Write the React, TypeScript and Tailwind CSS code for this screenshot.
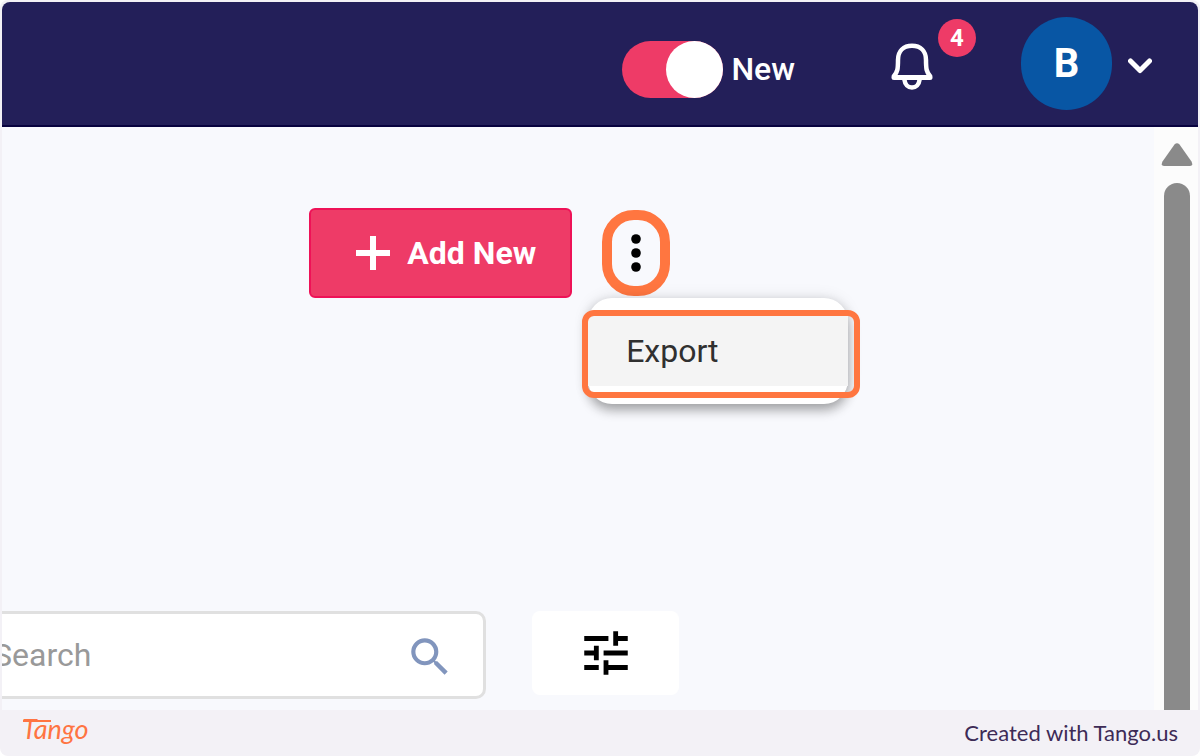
import React, { useState } from "react";
import { MdSearch, MdTune } from "react-icons/md";

function BellIcon() {
  return (
    <svg viewBox="0 0 42 48" className="h-12 w-[42px]" fill="none" stroke="#fff" strokeWidth="4.500" strokeLinecap="round" strokeLinejoin="round" aria-hidden="true">
      <path d="M3 34C6.500 30 7 27 7 18C7 9 12.500 3.800 21 3.800S35 9 35 18c0 9 .5 12 4 16" />
      <path d="M3 35.500h36" strokeWidth="5" />
      <path d="M13.500 38c.5 4.500 3.500 7.500 7.500 7.500s7-3 7.500-7.500" />
    </svg>
  );
}

function Header() {
  const [isNew, setIsNew] = useState(true);
  return (
    <header className="flex h-[125px] shrink-0 items-start justify-end border-b-2 border-[#08023f] bg-[#231f59] pr-[46px] text-white">
      <label className="mt-[39px] flex items-center gap-2 text-[32px] font-medium leading-[57px]">
        <input type="checkbox" role="switch" checked={isNew} onChange={(e) => setIsNew(e.target.checked)} className="peer sr-only" />
        <span className="flex h-[57px] w-[101px] justify-start rounded-full bg-[#8b89a8] peer-checked:justify-end peer-checked:bg-[#ee3b67]">
          <span className="size-[57px] rounded-full bg-white" />
        </span>
        New
      </label>
      <button type="button" aria-label="Notifications, 4 unread" className="relative ml-24 mt-10">
        <BellIcon />
        <span className="absolute -right-[43px] -top-[23px] flex size-[38px] items-center justify-center rounded-full bg-[#ee3b67] text-2xl font-bold">
          4
        </span>
      </button>
      <button type="button" aria-label="Account" className="ml-[88px] mt-[15px] flex items-center gap-4">
        <span className="flex h-[93px] w-[91px] items-center justify-center rounded-full bg-[#0856a4] text-[40px] font-bold">B</span>
        <svg viewBox="0 0 24 16" className="mt-1 h-4 w-6" fill="none" stroke="#fff" strokeWidth="5" strokeLinecap="round" strokeLinejoin="round" aria-hidden="true">
          <path d="M2.500 3L12 12.500L21.500 3" />
        </svg>
      </button>
    </header>
  );
}

function Toolbar() {
  return (
    <div className="flex items-center justify-end gap-[30px] pr-[42%]">
      <button type="button" className="flex h-[90px] items-center gap-4 rounded-md border-2 border-[#ee1257] bg-[#ee3b67] pl-11 pr-[34px] text-[32px] font-bold text-white">
        <svg viewBox="0 0 36 36" className="size-9" stroke="#fff" strokeWidth="6" aria-hidden="true">
          <path d="M18 1v34M1 18h34" />
        </svg>
        Add New
      </button>
      <div className="relative">
        <button type="button" aria-label="More actions" aria-haspopup="menu" className="flex h-[86px] w-[68px] items-center justify-center rounded-[32px] border-[10px] border-[#ff7640]">
          <svg viewBox="0 0 10 38" className="h-[38px] w-2.5" fill="#000" aria-hidden="true">
            <circle cx="5" cy="5" r="4.800" />
            <circle cx="5" cy="19" r="4.800" />
            <circle cx="5" cy="33" r="4.800" />
          </svg>
        </button>
        <div role="menu" className="absolute -left-3.5 top-[88px] w-[260px] rounded-3xl bg-white py-[18px] shadow-[0_6px_12px_rgba(0,0,0,0.32),0_0_16px_rgba(0,0,0,0.10)]">
          <button type="button" role="menuitem" className="block h-[70px] w-full bg-[#f4f4f4] pl-[38px] text-left text-[32px] text-[#303030]">
            Export
          </button>
          <span className="pointer-events-none absolute -left-1.5 top-3 h-[88px] w-[278px] rounded-xl border-[6px] border-[#ff7640]" />
        </div>
      </div>
    </div>
  );
}

function SearchRow() {
  return (
    <div className="flex items-start gap-[46px]">
      <div className="-ml-6 flex h-[88px] w-[508px] items-center rounded-[10px] border-[3px] border-[#e0e0e0] bg-white pr-7">
        <input type="text" aria-label="Search" placeholder="Search" className="min-w-0 flex-1 bg-transparent pl-3 text-[32px] text-[#333] outline-none placeholder:text-[#999]" />
        <button type="button" aria-label="Run search" className="pt-1">
          <MdSearch className="size-[50px] text-[#8195bd]" />
        </button>
      </div>
      <button type="button" aria-label="Filters" className="flex h-[84px] w-[147px] items-center justify-center rounded-lg bg-white">
        <MdTune className="size-[58px] text-black" />
      </button>
    </div>
  );
}

function ScrollBar() {
  return (
    <div className="flex w-11 shrink-0 flex-col items-center bg-[#fcfcfc] pl-0.5 pt-4" aria-hidden="true">
      <svg viewBox="0 0 32 24" className="h-6 w-8" fill="#8a8a8a">
        <path d="M13.500 1.500Q16 -1 18.500 1.500L30.500 18.500Q32.500 23 29 23H3Q-.5 23 1.500 18.500Z" />
      </svg>
      <div className="mt-4 w-[26px] flex-1 rounded-t-full bg-[#8a8a8a]" />
    </div>
  );
}

export default function App() {
  return (
    <div className="min-h-screen bg-white">
      <div className="flex min-h-screen flex-col rounded-lg bg-[#f3f1f6] px-0.5 pt-0.5 font-['Roboto',sans-serif]">
        <div className="flex flex-1 flex-col overflow-hidden rounded-t-lg bg-[#f8f9fd]">
          <Header />
          <div className="flex flex-1">
            <main className="flex min-w-0 flex-1 flex-col justify-between pb-[11px] pt-[81px]">
              <Toolbar />
              <SearchRow />
            </main>
            <ScrollBar />
          </div>
        </div>
        <footer className="flex h-[46px] items-center justify-between px-5 pb-0.5 font-['Lato',sans-serif]">
          <a href="#tango" aria-label="Tango">
            <svg viewBox="0 0 80 44" className="h-11 w-20" aria-hidden="true">
              <text x="0" y="29" fill="#ff7442" fontSize="27" fontStyle="italic" fontWeight="400">
                Tango
              </text>
              <path d="M1 11h28" stroke="#ff7442" strokeWidth="2" />
            </svg>
          </a>
          <p className="text-[22px] text-[#3d2b56]">Created with Tango.us</p>
        </footer>
      </div>
    </div>
  );
}
